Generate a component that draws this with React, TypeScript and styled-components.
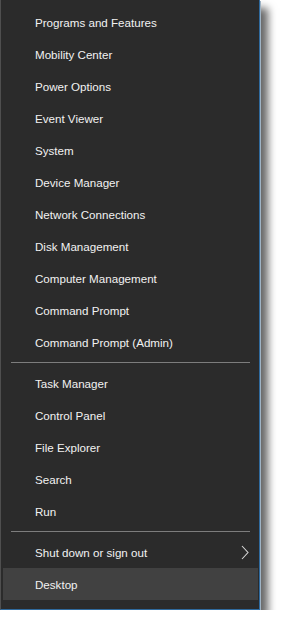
import React, { FC } from 'react';
import styled, { createGlobalStyle } from 'styled-components';

const GlobalStyle = createGlobalStyle`
  html, body {
    margin: 0;
    padding: 0;
    background: #ffffff;
  }
`;

const Menu = styled.div`
  width: 258px;
  background: #2b2b2b;
  padding: 6px 0 9px;
  border-left: 1px solid #4f4f4f;
  border-right: 1px solid #2f6a9e;
  border-bottom: 1px solid #2f6a9e;
  box-shadow: 1px 1px 0 #9fb3c4, 8px 8px 8px rgba(0, 0, 0, 0.6);
  font-family: 'Segoe UI', 'Liberation Sans', Arial, sans-serif;
`;

const Item = styled.div<{ $active?: boolean }>`
  height: 32px;
  display: flex;
  align-items: center;
  justify-content: space-between;
  box-sizing: border-box;
  padding: 1px 10px 0 ${(p) => (p.$active ? 32 : 34)}px;
  margin: ${(p) => (p.$active ? '0 1px 0 2px' : '0')};
  background: ${(p) => (p.$active ? '#414141' : 'transparent')};
  color: #f2f2f2;
  font-size: 11.6px;
  cursor: default;
`;

const Separator = styled.div`
  height: 1px;
  margin: 4px 9px 4px 10px;
  background: #7d7d7d;
`;

const Chevron = () => (
  <svg width="8" height="15" viewBox="0 0 8 15">
    <polyline points="1,1 7,7.5 1,14" fill="none" stroke="#d8d8d8" strokeWidth="1.1" />
  </svg>
);

const groups: string[][] = [
  [
    'Programs and Features',
    'Mobility Center',
    'Power Options',
    'Event Viewer',
    'System',
    'Device Manager',
    'Network Connections',
    'Disk Management',
    'Computer Management',
    'Command Prompt',
    'Command Prompt (Admin)',
  ],
  ['Task Manager', 'Control Panel', 'File Explorer', 'Search', 'Run'],
];

const App: FC = () => (
  <>
    <GlobalStyle />
    <Menu>
      {groups.map((group, i) => (
        <React.Fragment key={i}>
          {group.map((label) => (
            <Item key={label}>{label}</Item>
          ))}
          <Separator />
        </React.Fragment>
      ))}
      <Item>
        Shut down or sign out
        <Chevron />
      </Item>
      <Item $active>Desktop</Item>
    </Menu>
  </>
);

export default App;
